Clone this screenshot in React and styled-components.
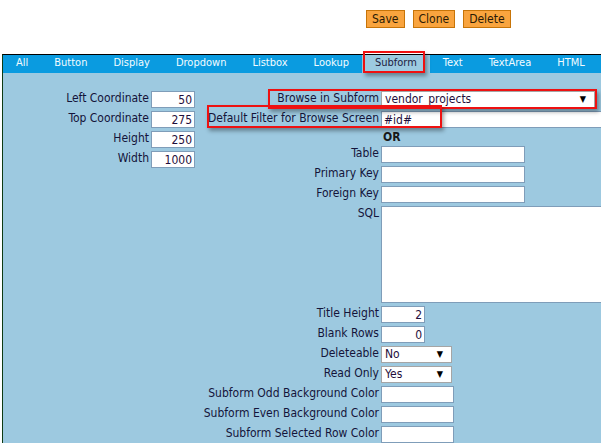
import React from "react";
import styled, { createGlobalStyle } from "styled-components";

const GlobalStyle = createGlobalStyle`
  html, body {
    margin: 0;
    padding: 0;
    overflow: hidden;
    background: #ffffff;
    font-family: "DejaVu Sans Condensed", "DejaVu Sans", sans-serif;
  }
`;

const Page = styled.div`
  position: relative;
  width: 601px;
  height: 443px;
  overflow: hidden;
`;

const TopBar = styled.div`
  height: 54px;
  box-sizing: border-box;
  padding: 10px 0 0 366px;
  display: flex;
  align-items: flex-start;
  gap: 8px;
`;

const ActionButton = styled.button`
  height: 18px;
  padding: 0 5px;
  margin: 0;
  border: 1px solid #c77408;
  background: #f9a43e;
  color: #2a1a05;
  font-family: inherit;
  font-size: 12px;
  line-height: 16px;
  cursor: pointer;
`;

const Frame = styled.div`
  margin-left: 2px;
  border-left: 1px solid #0d3a12;
  border-top: 1px solid #000;
  height: 389px;
  display: flex;
  flex-direction: column;
`;

const TabBar = styled.div`
  display: flex;
  height: 18px;
  background: #0a9be0;
`;

const Tab = styled.div`
  padding: 0 13px;
  font-size: 11px;
  line-height: 16px;
  color: ${(p) => (p.$active ? "#1c1c40" : "#f4fbff")};
  background: ${(p) => (p.$active ? "#9ccae0" : "transparent")};
  white-space: nowrap;
`;

const Panel = styled.div`
  flex: 1;
  background: #9dc9e0;
  padding-top: 18px;
  display: flex;
  align-items: flex-start;
`;

const Column = styled.div`
  display: flex;
  flex-direction: column;
  gap: 3px;
  margin-left: ${(p) => p.$offset || 0}px;
`;

const Row = styled.div`
  display: flex;
  align-items: flex-start;
  gap: 2px;
`;

const Label = styled.div`
  width: ${(p) => p.$w}px;
  text-align: right;
  font-size: 12px;
  line-height: 15px;
  color: #14143a;
  white-space: nowrap;
  flex-shrink: 0;
`;

const Field = styled.div`
  box-sizing: border-box;
  width: ${(p) => p.$w}px;
  height: ${(p) => p.$h || 17}px;
  background: #ffffff;
  border: 1px solid #7f9db9;
  font-size: 12px;
  line-height: 17px;
  padding: 0 2px;
  color: #1f0f3c;
  text-align: ${(p) => (p.$right ? "right" : "left")};
  white-space: nowrap;
  flex-shrink: 0;
  overflow: hidden;
`;

const SelectBox = styled(Field)`
  display: flex;
  justify-content: space-between;
  align-items: center;
  padding: 0 8px 0 3px;
  border-color: #a5a5a5;
`;

const Arrow = styled.span`
  font-size: 9px;
  color: #000;
`;

const OrText = styled.div`
  font-weight: bold;
  font-size: 12px;
  line-height: 12px;
  padding-left: 2px;
  color: #1a1a1a;
`;

const Highlight = styled.div`
  position: absolute;
  box-sizing: border-box;
  border: 2px solid #ee1111;
  box-shadow: 2px 3px 4px rgba(0, 0, 0, 0.35);
  pointer-events: none;
`;

const tabs = ["All", "Button", "Display", "Dropdown", "Listbox", "Lookup", "Subform", "Text", "TextArea", "HTML"];

const leftFields = [
  ["Left Coordinate", "50"],
  ["Top Coordinate", "275"],
  ["Height", "250"],
  ["Width", "1000"],
];

const colorFields = ["Subform Odd Background Color", "Subform Even Background Color", "Subform Selected Row Color"];

const RL = 179;

export default function App() {
  return (
    <Page>
      <GlobalStyle />
      <TopBar>
        <ActionButton>Save</ActionButton>
        <ActionButton>Clone</ActionButton>
        <ActionButton>Delete</ActionButton>
      </TopBar>
      <Frame>
        <TabBar>
          {tabs.map((t) => (
            <Tab key={t} $active={t === "Subform"}>{t}</Tab>
          ))}
        </TabBar>
        <Panel>
          <Column>
            {leftFields.map(([label, value]) => (
              <Row key={label}>
                <Label $w={146}>{label}</Label>
                <Field $w={44} $right>{value}</Field>
              </Row>
            ))}
          </Column>
          <Column $offset={5}>
            <Row>
              <Label $w={RL}>Browse in Subform</Label>
              <SelectBox $w={214}>
                <span>vendor_projects</span>
                <Arrow>▼</Arrow>
              </SelectBox>
            </Row>
            <Row>
              <Label $w={RL}>Default Filter for Browse Screen</Label>
              <Field $w={240}>#id#</Field>
            </Row>
            <Row>
              <Label $w={RL} />
              <OrText>OR</OrText>
            </Row>
            <Row>
              <Label $w={RL}>Table</Label>
              <Field $w={144} />
            </Row>
            <Row>
              <Label $w={RL}>Primary Key</Label>
              <Field $w={144} />
            </Row>
            <Row>
              <Label $w={RL}>Foreign Key</Label>
              <Field $w={144} />
            </Row>
            <Row>
              <Label $w={RL}>SQL</Label>
              <Field $w={240} $h={97} />
            </Row>
            <Row>
              <Label $w={RL}>Title Height</Label>
              <Field $w={44} $right>2</Field>
            </Row>
            <Row>
              <Label $w={RL}>Blank Rows</Label>
              <Field $w={44} $right>0</Field>
            </Row>
            <Row>
              <Label $w={RL}>Deleteable</Label>
              <SelectBox $w={71}>
                <span>No</span>
                <Arrow>▼</Arrow>
              </SelectBox>
            </Row>
            <Row>
              <Label $w={RL}>Read Only</Label>
              <SelectBox $w={71}>
                <span>Yes</span>
                <Arrow>▼</Arrow>
              </SelectBox>
            </Row>
            {colorFields.map((label) => (
              <Row key={label}>
                <Label $w={RL}>{label}</Label>
                <Field $w={73} />
              </Row>
            ))}
          </Column>
        </Panel>
      </Frame>
      <Highlight style={{ left: 363, top: 51, width: 62, height: 22 }} />
      <Highlight style={{ left: 268, top: 89, width: 329, height: 20 }} />
      <Highlight style={{ left: 207, top: 105, width: 235, height: 23 }} />
    </Page>
  );
}
